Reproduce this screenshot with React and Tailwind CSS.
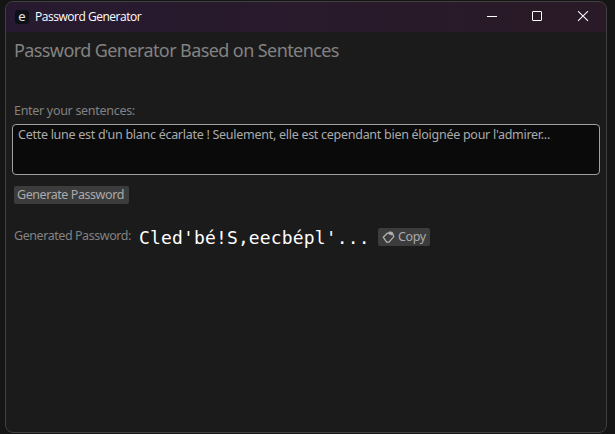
import React from "react";

function TitleBar() {
  return (
    <header className="flex h-[30px] shrink-0 items-center bg-gradient-to-r from-[#271a30] to-[#2a1a27] pl-[9px] font-['Open_Sans',sans-serif] text-white">
      <span className="flex h-[14px] w-[14px] items-center justify-center rounded-[3px] bg-[#0d1117] pb-[2px] font-['Noto_Sans',sans-serif] text-[13px] leading-none text-[#e4e4e4]">
        e
      </span>
      <span className="ml-[6px] flex-1 whitespace-nowrap text-[12px] leading-4 tracking-[-0.48px]">
        Password Generator
      </span>
      <svg className="mr-[17px] h-3 w-[102px]" viewBox="0 0 102 12" fill="none" stroke="white">
        <path d="M0 5.5H10" />
        <rect x="45.5" y="0.5" width="9" height="9" rx="0.5" />
        <path d="M91 0.2 101 9.8M101 0.2 91 9.8" strokeWidth="1.1" />
      </svg>
    </header>
  );
}

function ClipboardIcon() {
  return (
    <svg className="h-[14px] w-[13px] shrink-0" viewBox="0 0 13 14" fill="none" stroke="#b4b4b4" strokeWidth="1.2" strokeLinejoin="round">
      <path d="M5.8 2.8 1.2 7.2 4.6 12.2H7L11.8 6.6 10.8 4" />
      <path d="M5.8 3.4 7.2 1.8 10.4 2.2 11.2 4.4 9.4 5Z" fill="#b4b4b4" strokeWidth="0.6" />
    </svg>
  );
}

export default function App() {
  return (
    <div className="h-[434px] w-[615px] overflow-hidden bg-[#151515] pl-[5px] pt-[1px] font-['Noto_Sans',sans-serif]">
      <main className="flex h-[432px] w-[602px] flex-col overflow-hidden rounded-lg border border-[#404040] bg-[#1b1b1b]">
        <TitleBar />
        <section className="flex flex-col items-start pl-[8px] whitespace-nowrap">
          <h1 className="mt-[6px] h-6 text-[18px] font-normal leading-6 tracking-[-0.59px] text-[#828282]">
            Password Generator Based on Sentences
          </h1>
          <label htmlFor="sentences" className="mt-[40px] h-[18px] text-[12.5px] font-normal leading-[18px] tracking-[-0.3px] text-[#828282]">
            Enter your sentences:
          </label>
          <textarea
            id="sentences"
            spellCheck={false}
            className="-ml-[2px] mt-[4px] h-[51px] w-[588px] resize-none overflow-hidden rounded border border-[#a0a0a0] bg-[#0a0a0a] px-[5px] py-[1px] text-[12.5px] font-normal leading-[18px] tracking-[-0.275px] text-[#aaaaaa] outline-none"
            defaultValue="Cette lune est d'un blanc écarlate ! Seulement, elle est cependant bien éloignée pour l'admirer..."
          />
          <button className="mt-[11px] flex h-[18px] w-[115px] items-center rounded-[2px] bg-[#3c3c3c] pl-[3px] text-[12.5px] font-normal leading-[18px] tracking-[-0.43px] text-[#aaaaaa]">
            Generate Password
          </button>
          <div className="mt-[20px] flex h-[26px] items-center">
            <span className="w-[125px] pb-[2px] text-[12.5px] font-normal leading-[18px] tracking-[-0.44px] text-[#828282]">
              Generated Password:
            </span>
            <output className="w-[239px] pt-[2px] font-['DejaVu_Sans_Mono',monospace] text-[18px] leading-[26px] tracking-[0.15px] text-white">
              Cled'bé!S,eecbépl'...
            </output>
            <button className="flex h-[18px] w-[52px] items-center rounded-[2px] bg-[#3c3c3c] pl-[4px] text-[12.5px] font-normal leading-[18px] tracking-[-0.4px] text-[#aaaaaa]">
              <ClipboardIcon />
              <span className="ml-[3px]">Copy</span>
            </button>
          </div>
        </section>
      </main>
    </div>
  );
}
